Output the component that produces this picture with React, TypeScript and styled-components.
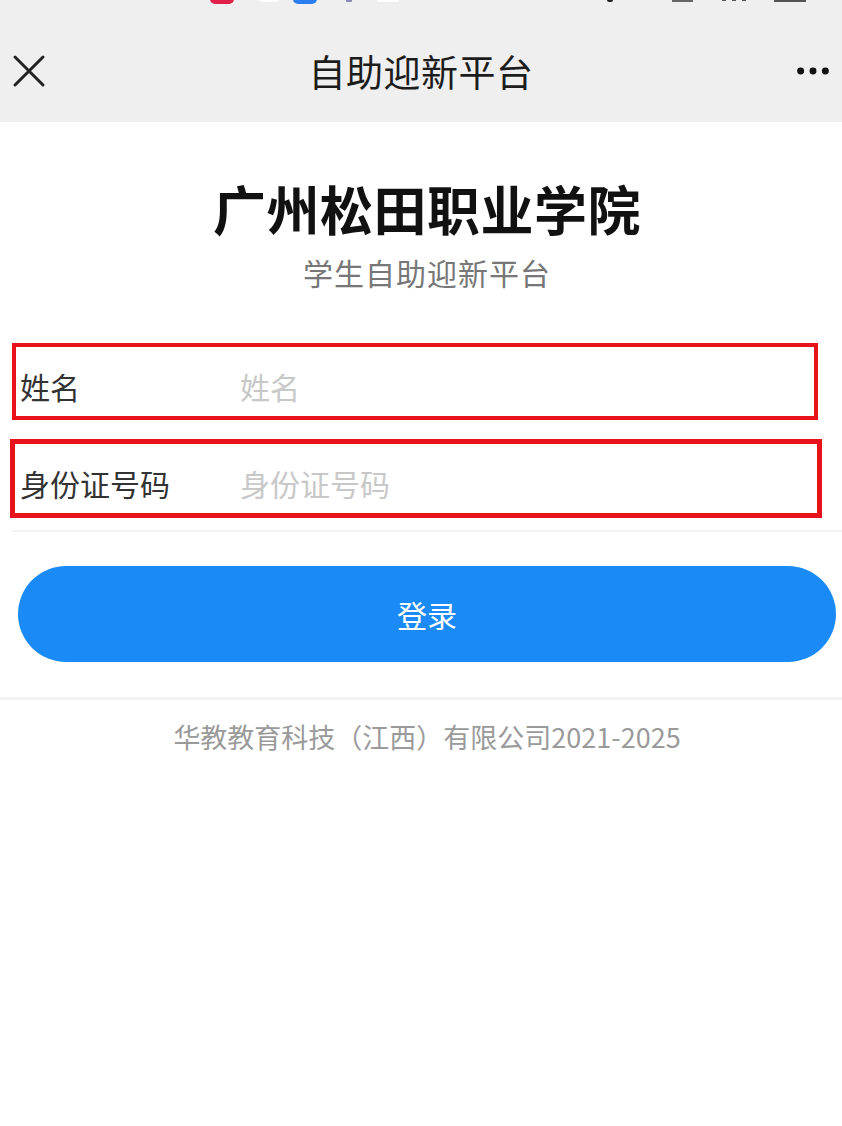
import styled, { createGlobalStyle } from "styled-components";

const GlobalStyle = createGlobalStyle`
    html, body {
        margin: 0;
        padding: 0;
        background: #ffffff;
        font-family: "Noto Sans CJK SC", "Noto Sans", sans-serif;
    }
`;

const Page = styled.div`
    width: 842px;
    min-height: 1126px;
    background: #ffffff;
`;

const Header = styled.header`
    background: #efefef;
    height: 122px;
    display: flex;
    flex-direction: column;
`;

const StatusStrip = styled.div`
    height: 20px;
    overflow: hidden;
    svg {
        display: block;
    }
`;

const NavBar = styled.div`
    flex: 1;
    display: flex;
    align-items: center;
    justify-content: space-between;
    padding: 0 12px;
`;

const NavTitle = styled.h1`
    margin: 0;
    font-size: 37px;
    font-weight: 400;
    color: #1c1c1c;
    letter-spacing: 0.5px;
`;

const IconButton = styled.div`
    width: 34px;
    height: 34px;
    display: flex;
    align-items: center;
    justify-content: center;
`;

const Main = styled.main`
    display: flex;
    flex-direction: column;
    align-items: center;
    padding: 54px 0 0 12px;
`;

const School = styled.h2`
    margin: 0;
    font-size: 53px;
    line-height: 64px;
    font-weight: 700;
    color: #111;
    letter-spacing: 0.5px;
`;

const Subtitle = styled.p`
    margin: 14px 0 0;
    font-size: 30px;
    line-height: 36px;
    color: #777;
    letter-spacing: 1px;
`;

const Form = styled.form`
    align-self: stretch;
    margin: 53px 0 0 -12px;
    display: flex;
    flex-direction: column;
`;

const Field = styled.label<{ $left: number; $right: number; $top: number; $height: number; $border: number }>`
    display: flex;
    align-items: center;
    box-sizing: border-box;
    margin: ${(p) => p.$top}px ${(p) => p.$right}px 0 ${(p) => p.$left}px;
    height: ${(p) => p.$height}px;
    border: ${(p) => p.$border}px solid #e8121a;
    padding: 8px 0 0 ${(p) => 20 - p.$left - p.$border}px;
`;

const FieldLabel = styled.span`
    width: 220px;
    font-size: 30px;
    color: #333;
`;

const FieldInput = styled.input`
    flex: 1;
    border: 0;
    outline: none;
    background: transparent;
    font-family: inherit;
    font-size: 30px;
    color: #333;
    padding: 0;
    &::placeholder {
        color: #c8c8c8;
    }
`;

const Divider = styled.div`
    height: 2px;
    background: #f3f3f3;
    margin: 12px 0 0 12px;
`;

const LoginButton = styled.button`
    margin: 34px 6px 0 18px;
    height: 96px;
    border: 0;
    border-radius: 48px;
    background: #1a8bf6;
    color: #fff;
    font-family: inherit;
    font-size: 30px;
    cursor: pointer;
`;

const FooterLine = styled.div`
    align-self: stretch;
    height: 3px;
    background: #f3f3f3;
    margin: 35px 0 0 -12px;
`;

const Footer = styled.footer`
    margin-top: 19px;
    font-size: 27px;
    line-height: 36px;
    color: #9a9a9a;
`;

function CloseIcon() {
    return (
        <svg width="34" height="34" viewBox="0 0 34 34">
            <path d="M3 3 L31 31 M31 3 L3 31" stroke="#222" strokeWidth="3" strokeLinecap="round" />
        </svg>
    );
}

function MoreIcon() {
    return (
        <svg width="44" height="12" viewBox="0 0 44 12">
            <circle cx="6" cy="6" r="4.5" fill="#111" />
            <circle cx="22" cy="6" r="4.5" fill="#111" />
            <circle cx="38" cy="6" r="4.5" fill="#111" />
        </svg>
    );
}

function StatusIcons() {
    // only the bottom edges of the status bar icons are left in the picture
    return (
        <svg width="842" height="6" viewBox="0 0 842 6">
            <rect x="210" y="-8" width="24" height="12" rx="5" fill="#e0204a" />
            <rect x="258" y="-8" width="22" height="10" rx="5" fill="#ffffff" />
            <rect x="293" y="-8" width="24" height="12" rx="5" fill="#2a7ef0" />
            <rect x="346" y="-4" width="6" height="6" rx="1" fill="#8a88b8" />
            <rect x="376" y="-8" width="24" height="10" rx="4" fill="#ffffff" />
            <rect x="607" y="-6" width="6" height="8" rx="2" fill="#222" />
            <rect x="643" y="-6" width="4" height="6" fill="#777" />
            <rect x="672" y="0" width="21" height="2" fill="#666" />
            <rect x="722" y="-6" width="4" height="7" fill="#555" />
            <rect x="732" y="-6" width="4" height="7" fill="#555" />
            <rect x="742" y="-6" width="4" height="7" fill="#555" />
            <rect x="774" y="0" width="32" height="2" fill="#555" />
        </svg>
    );
}

export default function App() {
    return (
        <Page>
            <GlobalStyle />
            <Header>
                <StatusStrip>
                    <StatusIcons />
                </StatusStrip>
                <NavBar>
                    <IconButton>
                        <CloseIcon />
                    </IconButton>
                    <NavTitle>自助迎新平台</NavTitle>
                    <IconButton>
                        <MoreIcon />
                    </IconButton>
                </NavBar>
            </Header>
            <Main>
                <School>广州松田职业学院</School>
                <Subtitle>学生自助迎新平台</Subtitle>
                <Form onSubmit={(e) => e.preventDefault()}>
                    <Field $left={12} $right={24} $top={0} $height={77} $border={4}>
                        <FieldLabel>姓名</FieldLabel>
                        <FieldInput placeholder="姓名" />
                    </Field>
                    <Field $left={10} $right={20} $top={19} $height={79} $border={5}>
                        <FieldLabel>身份证号码</FieldLabel>
                        <FieldInput placeholder="身份证号码" />
                    </Field>
                    <Divider />
                    <LoginButton type="submit">登录</LoginButton>
                </Form>
                <FooterLine />
                <Footer>华教教育科技（江西）有限公司2021-2025</Footer>
            </Main>
        </Page>
    );
}
